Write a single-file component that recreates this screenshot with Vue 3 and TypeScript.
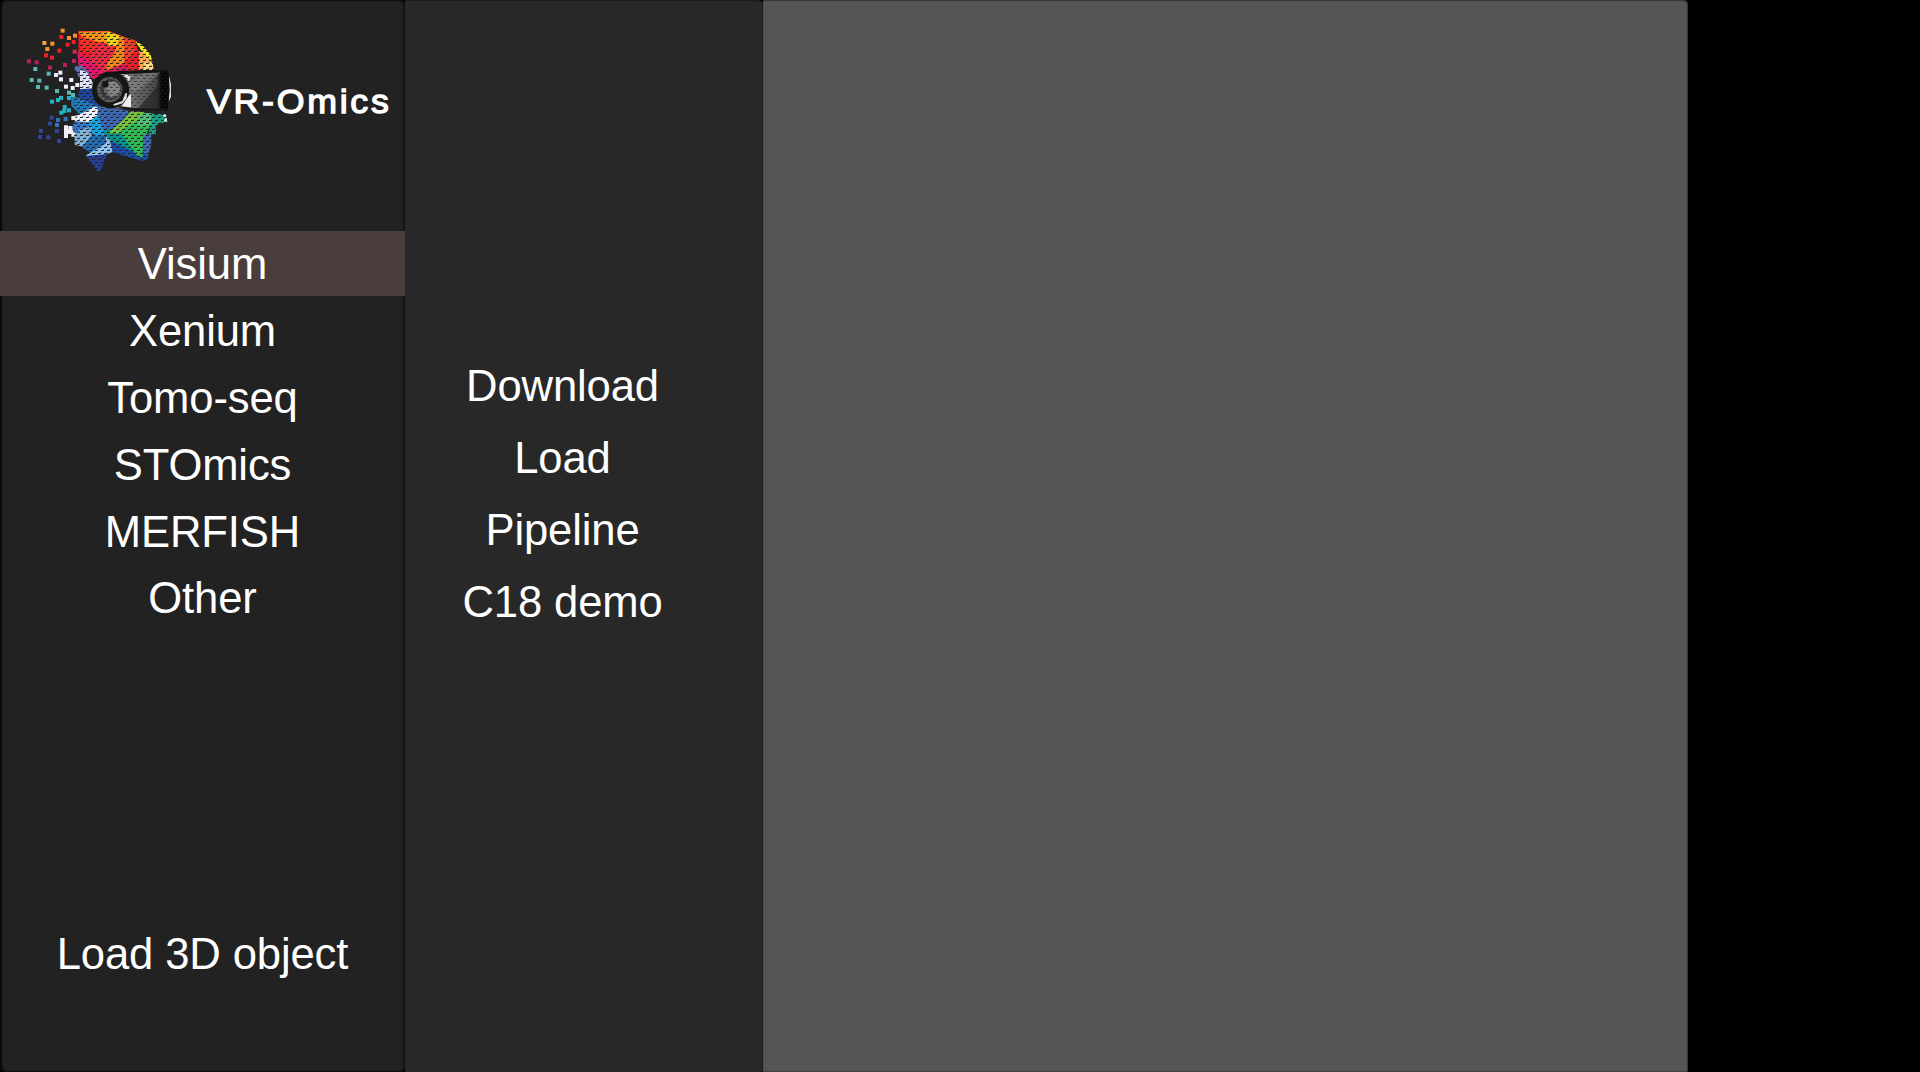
<script setup lang="ts">
import { ref } from 'vue'

const platforms: string[] = ['Visium', 'Xenium', 'Tomo-seq', 'STOmics', 'MERFISH', 'Other']
const actions: string[] = ['Download', 'Load', 'Pipeline', 'C18 demo']
const selected = ref('Visium')

interface Facet { points: string; fill: string }
interface Fleck { x: number; y: number; fill: string }

const facets: Facet[] = [
  // crown
  { points: '175,33 268,33 312,50 345,62 357,98 357,150 310,154 262,155 222,176 176,135', fill: '#f01e2c' },
  { points: '175,35 262,34 272,72 232,66 186,50', fill: '#f7941d' },
  { points: '262,34 310,50 296,76 268,80 258,60', fill: '#ecd523' },
  { points: '182,50 236,70 212,98 182,84', fill: '#f03322' },
  { points: '212,98 236,70 275,80 286,100 262,150 222,176 205,140', fill: '#ea2c42' },
  { points: '298,50 312,54 312,132 256,152 264,126 284,96', fill: '#f08a1c' },
  { points: '172,96 198,112 232,140 252,154 220,178 176,138', fill: '#e8176e' },
  { points: '312,52 345,60 342,108 312,132', fill: '#ea452c' },
  { points: '252,154 312,130 326,152 300,157', fill: '#d91d5c' },
  { points: '312,130 346,92 357,98 357,150 326,153', fill: '#e9202c' },
  { points: '345,62 366,74 392,104 397,126 368,98', fill: '#f6ec1c' },
  { points: '357,92 372,98 397,128 399,150 357,150', fill: '#f8a94a' },
  { points: '374,128 398,128 401,150 370,150', fill: '#f8dc80' },
  // temple
  { points: '165,142 184,136 208,158 205,182 176,172', fill: '#5870b4' },
  { points: '180,150 200,156 218,186 216,214 180,208', fill: '#dfe2f6' },
  { points: '180,208 218,205 222,240 246,262 190,256 172,234', fill: '#21479c' },
  { points: '154,226 180,236 234,258 240,280 180,284 154,258', fill: '#207ab8' },
  // jaw
  { points: '232,258 330,272 312,300 300,336 252,350 222,300', fill: '#3c68b4' },
  { points: '222,260 234,262 232,286 212,306 190,320 160,298 154,292 190,278', fill: '#f4f2fc' },
  { points: '208,304 234,285 254,346 228,350 206,330', fill: '#1ca4e2' },
  { points: '164,304 208,306 210,326 184,342 154,326', fill: '#3379c1' },
  { points: '132,316 144,316 144,328 156,328 166,338 176,338 176,350 154,350 154,342 144,342 144,354 132,354', fill: '#f4eefa' },
  { points: '164,332 210,322 216,346 188,380 164,374', fill: '#80b2d8' },
  { points: '184,382 216,346 260,350 256,374 214,398', fill: '#246cb2' },
  { points: '198,406 258,370 258,350 268,350 278,396 242,408 204,412', fill: '#8fc5f0' },
  { points: '198,408 262,402 246,442 236,458', fill: '#293d92' },
  { points: '268,350 352,398 386,400 382,420 362,422 278,396', fill: '#1c4ea6' },
  { points: '250,332 304,320 345,398 268,360', fill: '#059489' },
  { points: '310,300 332,274 372,276 356,300 298,340 264,340', fill: '#78c23c' },
  { points: '298,334 354,300 396,310 370,360 368,412 350,406', fill: '#32ba57' },
  { points: '370,278 398,280 402,312 354,318 350,300', fill: '#57bf7a' },
  { points: '392,282 436,282 442,304 408,316 408,342 384,344 394,312', fill: '#1ba087' },
  { points: '370,346 394,340 394,374 384,408 368,396', fill: '#3c69b1' },
  { points: '426,282 438,284 442,306 428,302 436,296', fill: '#d5f1e7' }
]

const flecks: Fleck[] = [
  [128, 32, '#f7941d'], [124, 51, '#f02024'], [147, 54, '#f7941d'], [165, 47, '#f7941d'],
  [73, 69, '#f7a13c'], [97, 71, '#f7941d'], [82, 87, '#f7941d'], [143, 74, '#f02024'],
  [161, 66, '#f02024'], [118, 92, '#f02024'], [78, 106, '#f02024'], [96, 113, '#f02024'],
  [164, 95, '#cd2955'], [27, 124, '#b9205b'], [50, 127, '#b9205b'], [90, 143, '#b9205b'],
  [135, 135, '#b9205b'], [162, 123, '#b9205b'], [46, 147, '#5ab9b5'], [86, 161, '#5ab9b5'],
  [108, 165, '#dfe7f8'], [121, 158, '#eeeefc'], [35, 180, '#5ab9b5'], [58, 182, '#5ab9b5'],
  [123, 178, '#eeeefc'], [154, 180, '#eeeefc'], [54, 201, '#5ab9b5'], [80, 203, '#5ab9b5'],
  [138, 200, '#eeeefc'], [158, 204, '#eeeefc'], [172, 195, '#eeeefc'], [111, 213, '#5ab9b5'],
  [147, 218, '#5ab9b5'], [159, 225, '#5ab9b5'], [123, 234, '#24b1c4'], [147, 234, '#24b1c4'],
  [96, 245, '#24b1c4'], [114, 240, '#24b1c4'], [134, 261, '#24b1c4'], [133, 273, '#24b1c4'],
  [124, 278, '#24b1c4'], [147, 271, '#24b1c4'], [95, 293, '#30459c'], [114, 300, '#3376c3'],
  [137, 297, '#3376c3'], [90, 311, '#30459c'], [111, 315, '#3376c3'], [63, 333, '#30459c'],
  [111, 333, '#30459c'], [60, 351, '#30459c'], [85, 352, '#30459c'], [117, 363, '#30459c'],
  [151, 324, '#f2ecf8'], [160, 294, '#f2ecf8'], [170, 145, '#5870b4'], [170, 332, '#3376c3']
].map(([x, y, fill]) => ({ x: x as number, y: y as number, fill: fill as string }))
</script>

<template>
  <div class="app">
    <aside class="panel sidebar">
      <header class="brand">
        <svg class="logo" viewBox="0 0 480 480" aria-hidden="true">
          <defs>
            <pattern id="mesh" width="18" height="18" patternUnits="userSpaceOnUse">
              <path d="M0 4.500h8M9 13.500h8" stroke="#222" stroke-width="3" />
              <path d="M8.500 0v5M17.500 9v5" stroke="#222" stroke-width="2" />
            </pattern>
            <pattern id="mesh-soft" width="18" height="18" patternUnits="userSpaceOnUse">
              <path d="M0 4.500h8M9 13.500h8" stroke="#222" stroke-width="3" opacity=".7" />
            </pattern>
            <linearGradient id="visor" x1="0" x2="1">
              <stop offset="0" stop-color="#7c7c7c" />
              <stop offset=".45" stop-color="#6c6c6c" />
              <stop offset=".8" stop-color="#484848" />
              <stop offset=".87" stop-color="#080808" />
              <stop offset="1" stop-color="#080808" />
            </linearGradient>
          </defs>
          <polygon v-for="(f, i) in facets" :key="i" :points="f.points" :fill="f.fill" />
          <path d="M178 28H405V155H235L216 215 245 265 445 275V465H160V140H178Z" fill="url(#mesh)" />
          <rect
            v-for="(f, i) in flecks" :key="'f' + i"
            :x="f.x - 6" :y="f.y - 6" width="12" height="12" :fill="f.fill"
          />
          <path d="M446 164l7 28v38l-7 16z" fill="#ddd" />
          <path d="M268 156L430 154 446 158 449 210 443 272 330 266 250 264Z" fill="url(#visor)" />
          <path d="M300 162L332 166 328 183 334 206 330 190 318 172Z" fill="#e2e2e2" />
          <path d="M375 155l48 0-60 52-30 8-3-25z" fill="#888" opacity=".55" />
          <path d="M352 267l66-76v80z" fill="#222" opacity=".65" />
          <path d="M268 156L430 154 446 158 449 210 443 272 330 266 250 264Z" fill="url(#mesh-soft)" />
          <path d="M222 166L300 152 444 151V156L304 163Z" fill="#111" />
          <path d="M270 254L330 263 442 268V273L325 270Z" fill="#171717" />
          <circle cx="272" cy="210" r="50" fill="#171717" stroke="#151515" stroke-width="11" />
          <circle cx="269" cy="209" r="38" fill="#5c5c5c" />
          <circle cx="272" cy="208" r="31" fill="#303030" />
          <circle cx="276" cy="208" r="25" fill="#858585" />
          <path d="M245 183l27 47 21-8-9 16h-25l-17-24z" fill="#444" opacity=".5" />
          <path d="M247 183h18v18h-18z" fill="#151515" />
          <circle cx="269" cy="209" r="39" fill="url(#mesh-soft)" />
          <path d="M316 220l5-1-1 16-12 15-24 7-5-4 28-10z" fill="#ddd" />
          <path d="M326 228l7-6v40l-28-3z" fill="#eee" />
        </svg>
        <h1 class="title">VR-Omics</h1>
      </header>
      <nav class="platforms">
        <button
          v-for="name in platforms" :key="name" class="item"
          :class="{ active: name === selected }" @click="selected = name"
        >{{ name }}</button>
      </nav>
      <button class="item load-object">Load 3D object</button>
    </aside>
    <section class="panel submenu">
      <button v-for="name in actions" :key="name" class="item action">{{ name }}</button>
    </section>
    <main class="panel stage"></main>
  </div>
</template>

<style>
body { background: #000; }
</style>

<style scoped>
.app {
  display: flex;
  width: 1920px;
  height: 1072px;
  overflow: hidden;
  background: #000;
  font-family: "Liberation Sans", Arial, sans-serif;
  color: #fff;
}
.panel {
  display: flex;
  flex-direction: column;
  flex: none;
  box-sizing: border-box;
}
.sidebar {
  width: 405px;
  background: #222;
  border-radius: 5px;
  box-shadow: inset 2px 0 2px #080808, inset -2px 0 2px #131313, inset 0 1px 1px #151515, inset 0 -1px 1px #151515;
}
.brand {
  display: flex;
  align-items: flex-start;
  height: 231px;
  padding: 20px 0 0 20px;
  box-sizing: border-box;
}
.logo { width: 160px; height: 160px; flex: none; }
.title {
  margin: 60px 0 0 27px;
  font-size: 34px;
  font-weight: 400;
  line-height: 42px;
  letter-spacing: 2.6px;
  white-space: nowrap;
  transform: scaleX(1.05);
  transform-origin: left center;
  -webkit-text-stroke: 1.3px #fff;
}
.platforms {
  display: flex;
  flex-direction: column;
  gap: 1.9px;
}
.item {
  display: block;
  width: 100%;
  height: 65px;
  padding: 2px 0 0;
  border: 0;
  background: transparent;
  color: inherit;
  font: 43.6px/63px "Liberation Sans", Arial, sans-serif;
  letter-spacing: -0.12px;
  text-align: center;
}
.item.active { background: #4a3e3d; }
.load-object { margin: auto 0 86px; }
.submenu {
  width: 358px;
  padding: 349px 43px 0 0;
  background: #282828;
  border-radius: 0 5px 2px 0;
  box-shadow: inset 0 1px 1px #1b1b1b, inset -1px 0 1px #202020;
}
.item.action { height: 72px; line-height: 70px; }
.stage {
  width: 925px;
  background: #555;
  border-radius: 0 5px 2px 0;
  box-shadow: inset 0 1px 1px #333, inset -1px 0 1px #333, inset 0 -1px 1px #444;
}
</style>
